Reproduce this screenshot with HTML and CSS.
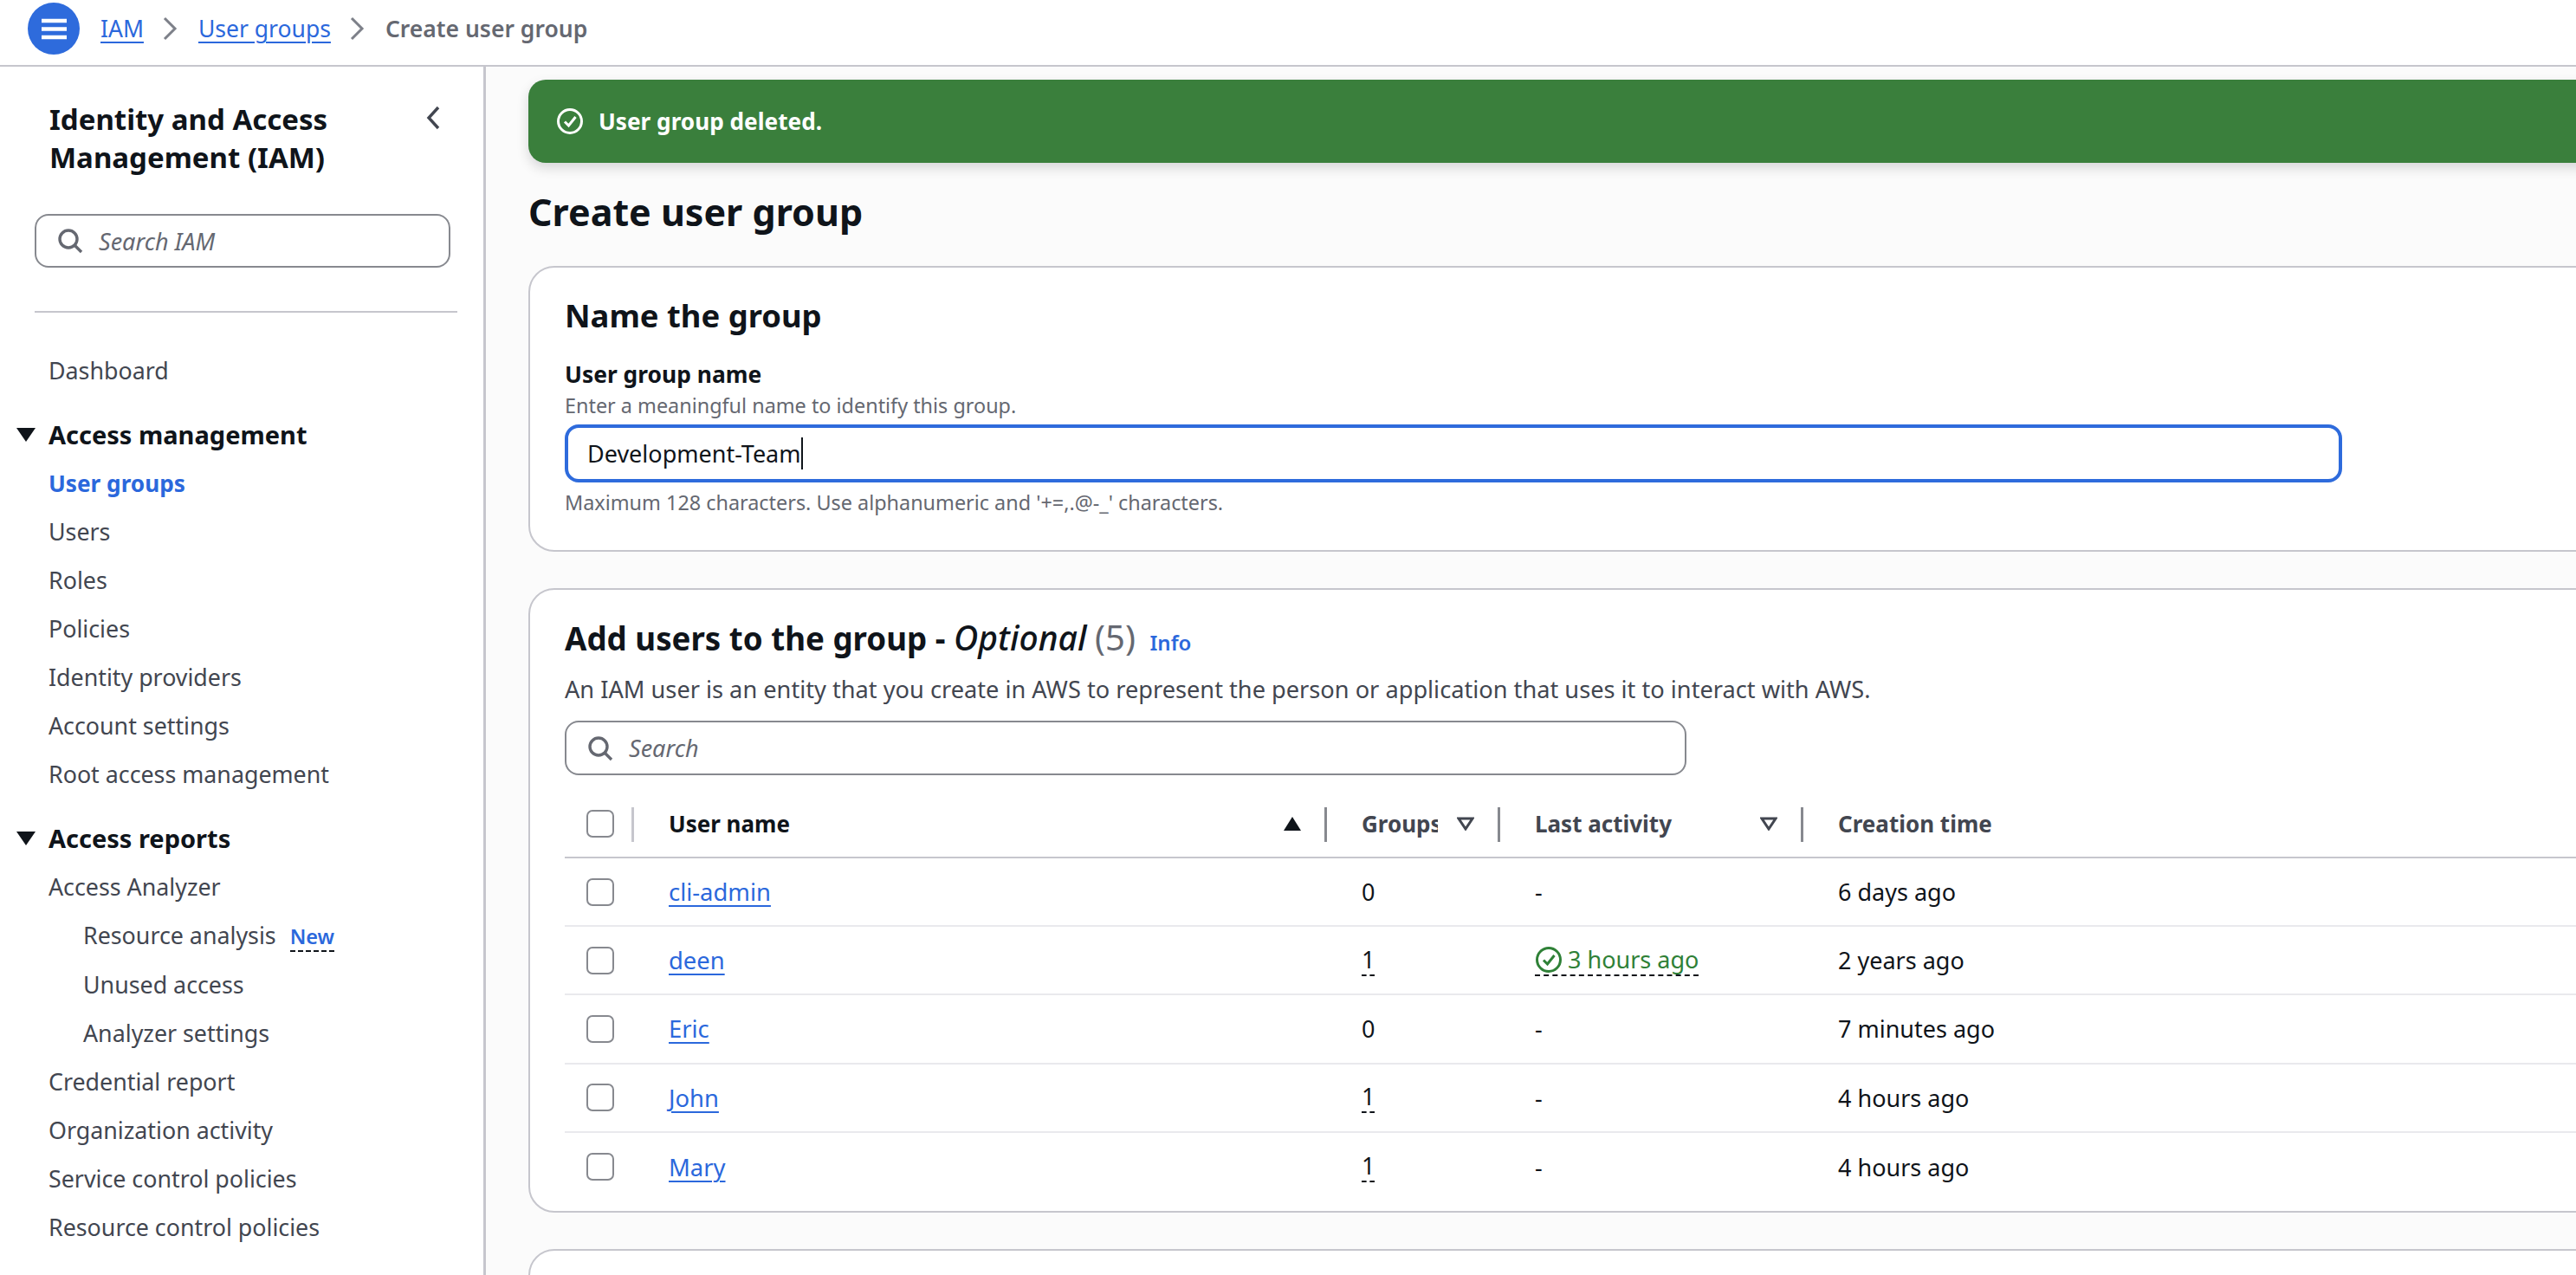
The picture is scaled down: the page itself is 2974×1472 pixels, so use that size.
FILE: index.html
```html
<!DOCTYPE html>
<html lang="en">
<head>
    <meta charset="UTF-8">
    <title>Create user group</title>
    <link rel="stylesheet" href="styles.css">
</head>
<body>
    <header class="topbar">
        <button class="menu-btn" type="button" aria-label="Menu">
            <svg width="29" height="25" viewBox="0 0 29 25"><path d="M0 3h29M0 12.5h29M0 22h29" stroke="#fff" stroke-width="4.4" fill="none"/></svg>
        </button>
        <nav class="crumbs">
            <a href="#">IAM</a>
            <svg class="crumb-sep" width="18" height="28" viewBox="0 0 18 28"><path d="M3 2l12 12L3 26" stroke="#7d8089" stroke-width="3" fill="none"/></svg>
            <a href="#">User groups</a>
            <svg class="crumb-sep" width="18" height="28" viewBox="0 0 18 28"><path d="M3 2l12 12L3 26" stroke="#7d8089" stroke-width="3" fill="none"/></svg>
            <span class="crumb-current">Create user group</span>
        </nav>
    </header>

    <div class="layout">
        <aside class="sidebar">
            <div class="side-head">
                <h2>Identity and Access Management (IAM)</h2>
                <svg class="side-close" width="20" height="28" viewBox="0 0 20 28"><path d="M16 2L5 14l11 12" stroke="#424650" stroke-width="3.4" fill="none"/></svg>
            </div>
            <div class="search side-search">
                <svg width="30" height="30" viewBox="0 0 30 30"><circle cx="13" cy="13" r="10" stroke="#656871" stroke-width="3.4" fill="none"/><path d="M20 20l8 8" stroke="#656871" stroke-width="3.4"/></svg>
                <span>Search IAM</span>
            </div>
            <hr class="side-rule">
            <ul class="nav">
                <li><a href="#">Dashboard</a></li>
                <li class="nav-section"><svg width="22" height="16" viewBox="0 0 22 16"><path d="M0 0h22L11 16z" fill="#0f141a"/></svg>Access management</li>
                <li><a class="active" href="#">User groups</a></li>
                <li><a href="#">Users</a></li>
                <li><a href="#">Roles</a></li>
                <li><a href="#">Policies</a></li>
                <li><a href="#">Identity providers</a></li>
                <li><a href="#">Account settings</a></li>
                <li><a href="#">Root access management</a></li>
                <li class="nav-section"><svg width="22" height="16" viewBox="0 0 22 16"><path d="M0 0h22L11 16z" fill="#0f141a"/></svg>Access reports</li>
                <li><a href="#">Access Analyzer</a></li>
                <li class="sub"><a href="#">Resource analysis</a><span class="new-tag">New</span></li>
                <li class="sub"><a href="#">Unused access</a></li>
                <li class="sub"><a href="#">Analyzer settings</a></li>
                <li><a href="#">Credential report</a></li>
                <li><a href="#">Organization activity</a></li>
                <li><a href="#">Service control policies</a></li>
                <li><a href="#">Resource control policies</a></li>
            </ul>
        </aside>

        <main class="content">
            <div class="flash">
                <svg width="32" height="32" viewBox="0 0 32 32"><circle cx="16" cy="16" r="13.5" stroke="#fff" stroke-width="3" fill="none"/><path d="M10 16.5l4.5 4.5 8-10" stroke="#fff" stroke-width="3" fill="none"/></svg>
                <span>User group deleted.</span>
            </div>

            <h1 class="page-title">Create user group</h1>

            <section class="card name-card">
                <h2>Name the group</h2>
                <div class="field-label">User group name</div>
                <div class="field-desc">Enter a meaningful name to identify this group.</div>
                <div class="name-input"><span class="caret">Development-Team</span></div>
                <div class="field-hint">Maximum 128 characters. Use alphanumeric and '+=,.@-_' characters.</div>
            </section>

            <section class="card users-card">
                <h2>Add users to the group - <em>Optional</em> <span class="count">(5)</span> <a class="info" href="#">Info</a></h2>
                <p class="card-desc">An IAM user is an entity that you create in AWS to represent the person or application that uses it to interact with AWS.</p>
                <div class="search table-search">
                    <svg width="30" height="30" viewBox="0 0 30 30"><circle cx="13" cy="13" r="10" stroke="#656871" stroke-width="3.4" fill="none"/><path d="M20 20l8 8" stroke="#656871" stroke-width="3.4"/></svg>
                    <span>Search</span>
                </div>

                <div class="row head">
                    <div class="cell check-cell"><i class="check"></i><b class="sep"></b></div>
                    <div class="cell name-cell">User name<svg class="sort" width="20" height="16" viewBox="0 0 20 16"><path d="M10 0l10 16H0z" fill="#0f141a"/></svg><b class="sep"></b></div>
                    <div class="cell"><span class="clip">Groups</span><svg class="sort" width="20" height="16" viewBox="0 0 20 16"><path d="M2 2h16L10 14z" stroke="#424650" stroke-width="3" fill="none"/></svg><b class="sep"></b></div>
                    <div class="cell">Last activity<svg class="sort" width="20" height="16" viewBox="0 0 20 16"><path d="M2 2h16L10 14z" stroke="#424650" stroke-width="3" fill="none"/></svg><b class="sep"></b></div>
                    <div class="cell">Creation time</div>
                </div>
                <div class="row">
                    <div class="cell check-cell"><i class="check"></i></div>
                    <div class="cell"><a href="#">cli-admin</a></div>
                    <div class="cell">0</div>
                    <div class="cell">-</div>
                    <div class="cell">6 days ago</div>
                </div>
                <div class="row">
                    <div class="cell check-cell"><i class="check"></i></div>
                    <div class="cell"><a href="#">deen</a></div>
                    <div class="cell"><span class="dashed">1</span></div>
                    <div class="cell"><span class="dashed activity"><svg width="32" height="32" viewBox="0 0 32 32"><circle cx="16" cy="16" r="13.5" stroke="#2f8137" stroke-width="3" fill="none"/><path d="M10 16.5l4.5 4.5 8-10" stroke="#2f8137" stroke-width="3" fill="none"/></svg>3 hours ago</span></div>
                    <div class="cell">2 years ago</div>
                </div>
                <div class="row">
                    <div class="cell check-cell"><i class="check"></i></div>
                    <div class="cell"><a href="#">Eric</a></div>
                    <div class="cell">0</div>
                    <div class="cell">-</div>
                    <div class="cell">7 minutes ago</div>
                </div>
                <div class="row">
                    <div class="cell check-cell"><i class="check"></i></div>
                    <div class="cell"><a href="#">John</a></div>
                    <div class="cell"><span class="dashed">1</span></div>
                    <div class="cell">-</div>
                    <div class="cell">4 hours ago</div>
                </div>
                <div class="row">
                    <div class="cell check-cell"><i class="check"></i></div>
                    <div class="cell"><a href="#">Mary</a></div>
                    <div class="cell"><span class="dashed">1</span></div>
                    <div class="cell">-</div>
                    <div class="cell">4 hours ago</div>
                </div>
            </section>

            <section class="card empty-card"></section>
        </main>
    </div>
</body>
</html>
```

FILE: styles.css
```css
/* General */
html, body {
    height: 100%;
    overflow: hidden;
}

body {
    margin: 0;
    font-family: "Noto Sans", sans-serif;
    font-size: 27px;
    color: #0f141a;
    background: #fff;
}

a {
    color: #2b68dc;
    text-decoration-thickness: 2px;
    text-underline-offset: 5px;
}

/* Top bar */
.topbar {
    display: flex;
    align-items: center;
    height: 66px;
    padding: 0 0 9px 32px;
    border-bottom: 2px solid #c6c6cd;
}

.menu-btn {
    display: flex;
    align-items: center;
    justify-content: center;
    width: 60px;
    height: 60px;
    padding: 0;
    border: none;
    border-radius: 50%;
    background: #2e6bdc;
}

.crumbs {
    display: flex;
    align-items: center;
    margin-left: 24px;
    font-size: 26.5px;
}

.crumb-sep {
    margin: 0 24px 0 21px;
}

.crumb-current {
    font-weight: 600;
    color: #656871;
}

/* Layout */
.layout {
    display: flex;
    height: calc(100% - 77px);
}

.sidebar {
    flex: 0 0 558px;
    padding: 39px 0 0 0;
    border-right: 3px solid #c6c6cd;
}

.side-head {
    display: flex;
    justify-content: space-between;
    padding: 0 48px 0 57px;
}

.side-head h2 {
    width: 400px;
    margin: 0;
    font-size: 33px;
    line-height: 44px;
    font-weight: 700;
}

.side-close {
    margin-top: 6px;
}

.search {
    display: flex;
    align-items: center;
    gap: 18px;
    box-sizing: border-box;
    padding-left: 24px;
    border: 2px solid #87898f;
    border-radius: 16px;
    background: #fff;
    font-style: italic;
    color: #656871;
}

.side-search {
    width: 480px;
    height: 62px;
    margin: 43px 0 0 40px;
}

.side-rule {
    width: 488px;
    height: 2px;
    margin: 50px 0 0 40px;
    border: none;
    background: #c6c6cd;
}

/* Side nav */
.nav {
    margin: 39px 0 0;
    padding: 0 0 0 56px;
    list-style: none;
    font-size: 26.8px;
    line-height: 56px;
}

.nav a {
    color: #424650;
    text-decoration: none;
}

.nav a.active {
    color: #2b68dc;
    font-size: 26.2px;
    font-weight: 700;
}

.nav-section {
    position: relative;
    margin-top: 18px;
    font-size: 29px;
    font-weight: 700;
}

.nav-section svg {
    position: absolute;
    left: -37px;
    top: 20px;
}

.nav .sub {
    padding-left: 40px;
}

.new-tag {
    margin-left: 16px;
    border-bottom: 2px dashed #0f141a;
    color: #2b68dc;
    font-size: 23.5px;
    font-weight: 600;
}

/* Main content */
.content {
    flex: 1;
    min-width: 0;
    padding: 15px 0 0 49px;
    background: #fbfbfb;
    overflow: hidden;
}

.flash {
    display: flex;
    align-items: center;
    gap: 17px;
    width: 2600px;
    height: 96px;
    padding-left: 32px;
    border-radius: 20px;
    background: #3a7f3c;
    box-shadow: 0 6px 14px rgba(0, 7, 22, 0.15);
    color: #fff;
    font-size: 26.2px;
    font-weight: 700;
}

.page-title {
    margin: 27px 0 32px;
    font-size: 43px;
    line-height: 60px;
    font-weight: 700;
}

.card {
    width: 2600px;
    margin-bottom: 42px;
    box-sizing: border-box;
    padding: 0 40px;
    border: 2px solid #c6c6cd;
    border-radius: 30px;
    background: #fff;
}

.card h2 {
    height: 40px;
    margin: 0;
    font-size: 36.4px;
    line-height: 40px;
    font-weight: 700;
}

.name-card {
    height: 330px;
    padding-top: 35px;
}

.field-label {
    margin-top: 30px;
    font-size: 26.4px;
    font-weight: 700;
    line-height: 36px;
}

.field-desc, .field-hint {
    font-size: 23.4px;
    line-height: 30px;
    color: #656871;
}

.field-desc {
    margin-top: 3px;
}

.name-input {
    display: flex;
    align-items: center;
    width: 2052px;
    height: 67px;
    margin-top: 7px;
    padding-left: 22px;
    box-sizing: border-box;
    border: 4px solid #2e6bdc;
    border-radius: 16px;
}

.caret {
    border-right: 2px solid #0f141a;
}

.field-hint {
    margin-top: 8px;
}

.users-card {
    height: 721px;
    padding-top: 35px;
}

.users-card h2 {
    font-size: 36.7px;
}

.users-card em {
    font-size: 39px;
    font-weight: 500;
}

.count {
    font-size: 40px;
    font-weight: 400;
    color: #656871;
}

.info {
    margin-left: 7px;
    font-size: 24px;
    font-weight: 600;
    text-decoration: none;
}

.card-desc {
    margin: 22px 0 0;
    font-size: 27.2px;
    line-height: 36px;
    color: #424650;
}

.table-search {
    width: 1295px;
    height: 63px;
    margin-top: 18px;
}

.empty-card {
    height: 200px;
}

/* Table */
.row {
    display: grid;
    grid-template-columns: 120px 800px 200px 350px 1fr;
    height: 79.2px;
    box-sizing: border-box;
    border-bottom: 2px solid #e9e9ed;
}

.row:last-child {
    border-bottom: none;
}

.row.head {
    height: 96px;
    padding-top: 18px;
    border-bottom-color: #c6c6cd;
    font-size: 26px;
    font-weight: 700;
    color: #424650;
}

.cell {
    position: relative;
    display: flex;
    align-items: center;
}

.cell a {
    font-size: 27.4px;
}

.check-cell {
    padding-left: 25px;
}

.name-cell {
    color: #0f141a;
}

.check {
    display: block;
    width: 32px;
    height: 32px;
    box-sizing: border-box;
    border: 2px solid #87898f;
    border-radius: 7px;
    background: #fff;
}

.sep {
    position: absolute;
    right: 40px;
    top: 19px;
    width: 3px;
    height: 40px;
    background: #87898f;
}

.head .check-cell .sep {
    background: #c6c6cd;
}

.sort {
    position: absolute;
    right: 70px;
    top: 30px;
}

.clip {
    display: block;
    width: 88px;
    overflow: hidden;
}

.dashed {
    border-bottom: 2px dashed #0f141a;
    line-height: 34px;
}

.activity {
    display: flex;
    align-items: center;
    gap: 6px;
    color: #2f8137;
}
```
